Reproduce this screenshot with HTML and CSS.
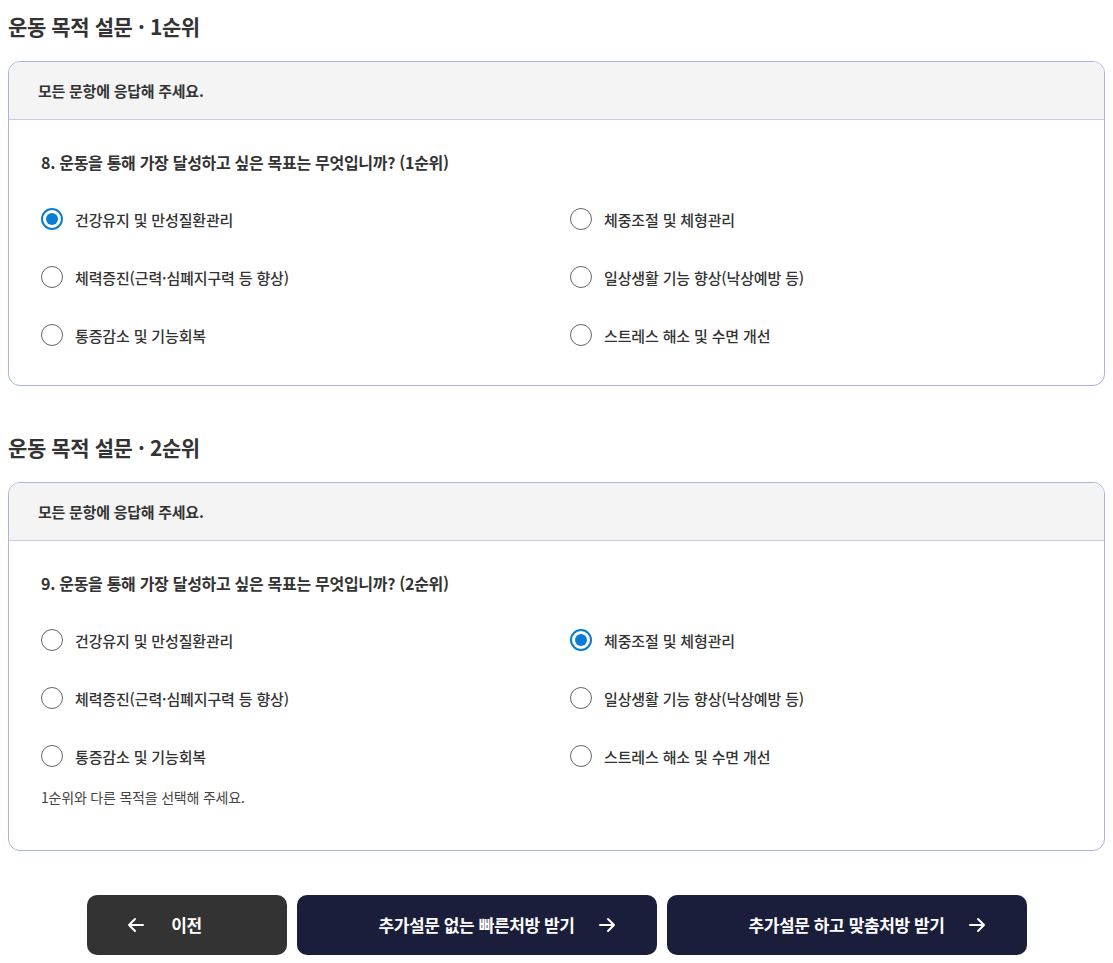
FILE: index.html
```html
<!DOCTYPE html>
<html lang="ko">
<head>
<meta charset="utf-8">
<link rel="stylesheet" href="styles.css">
</head>
<body>
<div class="page">
  <section class="section">
    <h2 class="title">운동 목적 설문 · 1순위</h2>
    <div class="card">
      <div class="card-head">모든 문항에 응답해 주세요.</div>
      <div class="card-body">
        <p class="question">8. 운동을 통해 가장 달성하고 싶은 목표는 무엇입니까? (1순위)</p>
        <div class="options">
          <label class="opt"><span class="radio checked"></span>건강유지 및 만성질환관리</label>
          <label class="opt"><span class="radio"></span>체중조절 및 체형관리</label>
          <label class="opt"><span class="radio"></span>체력증진(근력·심폐지구력 등 향상)</label>
          <label class="opt"><span class="radio"></span>일상생활 기능 향상(낙상예방 등)</label>
          <label class="opt"><span class="radio"></span>통증감소 및 기능회복</label>
          <label class="opt"><span class="radio"></span>스트레스 해소 및 수면 개선</label>
        </div>
      </div>
    </div>
  </section>
  <section class="section">
    <h2 class="title">운동 목적 설문 · 2순위</h2>
    <div class="card">
      <div class="card-head">모든 문항에 응답해 주세요.</div>
      <div class="card-body">
        <p class="question">9. 운동을 통해 가장 달성하고 싶은 목표는 무엇입니까? (2순위)</p>
        <div class="options">
          <label class="opt"><span class="radio"></span>건강유지 및 만성질환관리</label>
          <label class="opt"><span class="radio checked"></span>체중조절 및 체형관리</label>
          <label class="opt"><span class="radio"></span>체력증진(근력·심폐지구력 등 향상)</label>
          <label class="opt"><span class="radio"></span>일상생활 기능 향상(낙상예방 등)</label>
          <label class="opt"><span class="radio"></span>통증감소 및 기능회복</label>
          <label class="opt"><span class="radio"></span>스트레스 해소 및 수면 개선</label>
        </div>
        <p class="hint">1순위와 다른 목적을 선택해 주세요.</p>
      </div>
    </div>
  </section>
  <div class="actions">
    <button class="btn btn-prev">
      <span class="label">
        <svg class="arrow arrow-left" width="20" height="20" viewBox="0 0 20 20"><path d="M17 10H3M9 4l-6 6 6 6" fill="none" stroke="#fff" stroke-width="2" stroke-linecap="round" stroke-linejoin="round"/></svg>
        이전
      </span>
    </button>
    <button class="btn btn-next">
      <span class="label">
        추가설문 없는 빠른처방 받기
        <svg class="arrow arrow-right" width="20" height="20" viewBox="0 0 20 20"><path d="M3 10h14M11 4l6 6-6 6" fill="none" stroke="#fff" stroke-width="2" stroke-linecap="round" stroke-linejoin="round"/></svg>
      </span>
    </button>
    <button class="btn btn-next">
      <span class="label">
        추가설문 하고 맞춤처방 받기
        <svg class="arrow arrow-right" width="20" height="20" viewBox="0 0 20 20"><path d="M3 10h14M11 4l6 6-6 6" fill="none" stroke="#fff" stroke-width="2" stroke-linecap="round" stroke-linejoin="round"/></svg>
      </span>
    </button>
  </div>
</div>
</body>
</html>
```
FILE: styles.css
```css
* { box-sizing: border-box; }
html, body { margin: 0; padding: 0; background: #fff; }
body {
  font-family: "Noto Sans CJK KR", "Noto Sans", sans-serif;
  color: #333;
}
.page {
  padding: 8px 8px 0 8px;
}
.section { margin-bottom: 43px; }
.title {
  margin: 0;
  height: 36px;
  line-height: 36px;
  font-size: 21px;
  font-weight: 700;
  color: #333;
  letter-spacing: -0.4px;
}
.card {
  margin-top: 17px;
  border: 1px solid #a9b2e2;
  border-radius: 12px;
  overflow: hidden;
}
.card-head {
  height: 58px;
  background: #f4f4f4;
  border-bottom: 1px solid #c9cde6;
  padding-left: 29px;
  display: flex;
  align-items: center;
  font-size: 15px;
  font-weight: 700;
  color: #333;
  letter-spacing: -0.25px;
}
.card-body {
  padding: 28px 32px 21px 32px;
}
.question {
  margin: 0;
  font-size: 16px;
  line-height: 28px;
  font-weight: 700;
  color: #333;
  letter-spacing: -0.3px;
}
.options {
  margin-top: 14px;
  display: grid;
  grid-template-columns: 529px 1fr;
}
.opt {
  height: 58px;
  display: flex;
  align-items: center;
  font-size: 15px;
  font-weight: 500;
  color: #333;
  letter-spacing: -0.15px;
}
.radio {
  width: 22px;
  height: 22px;
  border-radius: 50%;
  border: 1px solid #666;
  margin-right: 12px;
  flex: none;
  position: relative;
  background: #fff;
}
.radio.checked {
  border: 2px solid #0b7dd1;
}
.radio.checked::after {
  content: "";
  position: absolute;
  left: 3px;
  top: 3px;
  width: 12px;
  height: 12px;
  border-radius: 50%;
  background: #0b7dd1;
}
.hint {
  margin: 0;
  font-size: 14px;
  line-height: 24px;
  color: #444;
  letter-spacing: -0.2px;
  padding-bottom: 20px;
}
.actions {
  display: flex;
  justify-content: center;
  gap: 10px;
  margin-top: 44px;
}
.btn {
  height: 60px;
  border: none;
  border-radius: 10px;
  color: #fff;
  font-family: inherit;
  font-size: 17px;
  font-weight: 700;
  letter-spacing: -0.4px;
  display: flex;
  align-items: center;
  justify-content: center;
  cursor: pointer;
  padding: 0;
}
.label {
  position: relative;
  display: inline-block;
  line-height: 24px;
}
.btn-prev {
  width: 200px;
  background: #333333;
}
.btn-next {
  width: 360px;
  background: #1b1e3b;
}
.arrow {
  position: absolute;
  top: 2px;
}
.arrow-left { left: -45px; }
.arrow-right { right: -43px; }
```
